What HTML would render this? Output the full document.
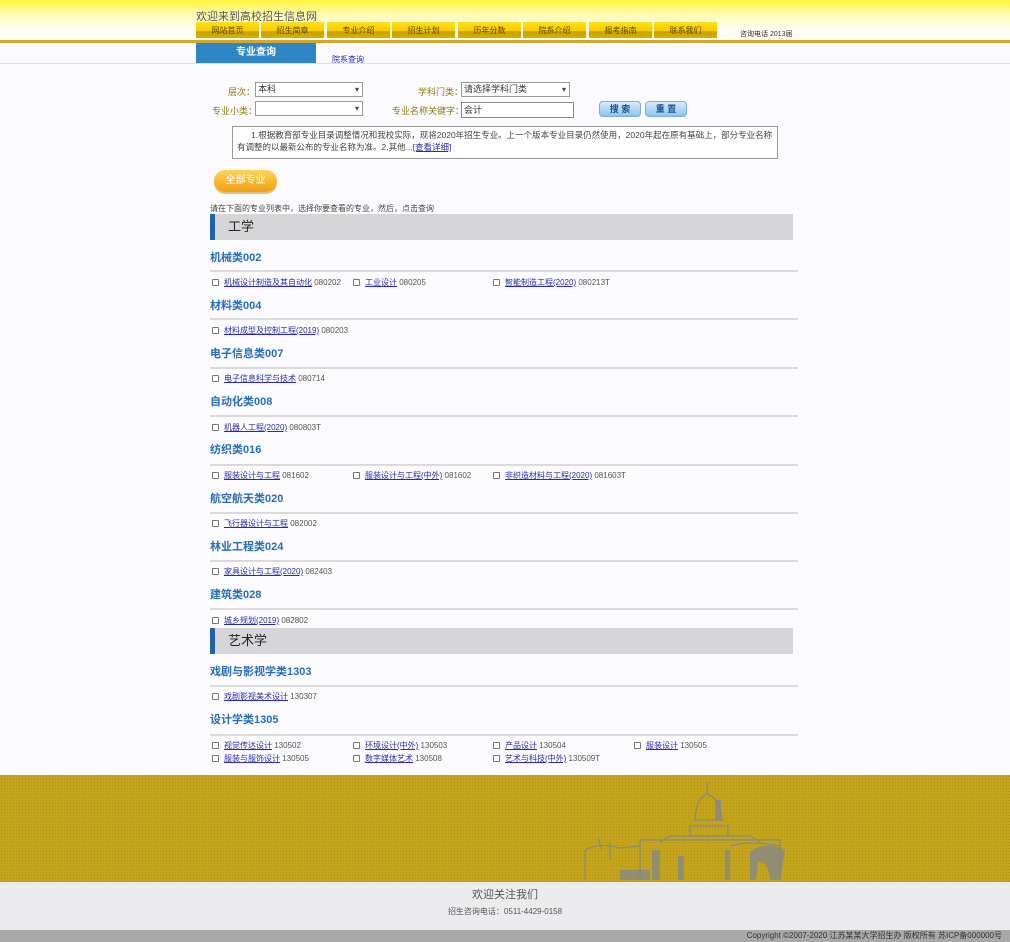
<!DOCTYPE html>
<html><head><meta charset="utf-8">
<style>
*{margin:0;padding:0;box-sizing:border-box}
body{width:1010px;height:942px;position:relative;background:#fbfbfd;font-family:"Liberation Sans","Noto Sans CJK SC",sans-serif;font-size:9px;color:#333;overflow:hidden}
.a{position:absolute;white-space:nowrap}
.hdr{left:0;top:0;width:1010px;height:41px;background:linear-gradient(#fff43a 0,#fffbb0 14px,#fffef0 28px,#fdfdf8 40px)}
.oline{left:0;top:40px;width:1010px;height:3px;background:#d7a62a}
.tab{top:22px;height:16px;width:64px;background:linear-gradient(#ffe01a 0,#f5cc00 55%,#c9a000 60%,#d8b000 100%);border-right:1px solid #fff6b0;text-align:center;line-height:18px;font-size:8px;color:#5a4a00}
.blue{left:196px;top:43px;width:120px;height:20px;background:#2f86c6;color:#fff;text-align:center;line-height:20px;font-size:10px;font-weight:bold}
.gl{left:0;top:63px;width:1010px;height:1px;background:#ddd}
.lbl{font-size:9px;color:#8a7a10}
.sel{height:15px;border:1px solid #999;background:#fff;font-size:9px;line-height:13px;padding-left:2px}
.sel:after{content:"▾";position:absolute;right:3px;top:0;font-size:8px;color:#444}
.btn{top:101px;height:16px;width:42px;border-radius:4px;background:linear-gradient(#d8ecfb,#8cc4ee);border:1px solid #7ab0dc;text-align:center;font-size:9px;line-height:14px;color:#1a4f8a;font-weight:bold}
.note{left:232px;top:126px;width:546px;height:33px;border:1px solid #999;background:#fff;font-size:8.5px;line-height:12px;padding:2px 4px;white-space:normal;color:#444}
.ob{left:214px;top:170px;width:63px;height:22px;border-radius:11px;background:linear-gradient(#ffd45a,#f0a010);box-shadow:0 2px 0 #e0c080;color:#fff;text-align:center;line-height:22px;font-size:10px}
.bar{left:210px;width:583px;height:26px;background:#d6d6d8;border-left:5px solid #1e63a8;font-size:13px;line-height:26px;padding-left:13px;color:#222}
.h{left:210px;font-size:11px;font-weight:bold;color:#2a6cb8}
.ln{left:210px;width:588px;height:2px;background:#dadada}
.it{font-size:8px;color:#555}
.it i{display:inline-block;width:7px;height:7px;border:1px solid #777;border-radius:1px;margin-right:5px;vertical-align:-1px;background:#fff}
.it u{color:#2a2ab0}
.gold{left:0;top:775px;width:1010px;height:107px;background:#c4a41c;background-image:radial-gradient(#b39415 0.6px,transparent 0.8px);background-size:3px 3px}
.gray{left:0;top:882px;width:1010px;height:48px;background:#ececee}
.dk{left:0;top:930px;width:1010px;height:12px;background:#a8a8a8;text-align:right;font-size:8px;line-height:12px;padding-right:8px;color:#333}
</style></head><body>
<div class="a hdr"></div>
<div class="a" style="left:196px;top:8px;font-size:11px;color:#555">欢迎来到高校招生信息网</div>
<div class="a tab" style="left:196px">网站首页</div>
<div class="a tab" style="left:261px">招生简章</div>
<div class="a tab" style="left:327px">专业介绍</div>
<div class="a tab" style="left:392px">招生计划</div>
<div class="a tab" style="left:458px">历年分数</div>
<div class="a tab" style="left:523px">院系介绍</div>
<div class="a tab" style="left:589px">报考指南</div>
<div class="a tab" style="left:654px;width:64px">联系我们</div>
<div class="a" style="left:740px;top:29px;font-size:7px;color:#333">咨询电话 2013届</div>
<div class="a oline"></div>
<div class="a blue">专业查询</div>
<div class="a" style="left:332px;top:54px;font-size:8px;color:#2a2ab0;text-decoration:underline">院系查询</div>
<div class="a gl"></div>

<div class="a lbl" style="left:228px;top:85px">层次：</div>
<div class="a sel" style="left:255px;top:82px;width:108px">本科</div>
<div class="a lbl" style="left:212px;top:104px">专业小类：</div>
<div class="a sel" style="left:255px;top:101px;width:108px"></div>
<div class="a lbl" style="left:418px;top:85px">学科门类：</div>
<div class="a sel" style="left:461px;top:82px;width:109px">请选择学科门类</div>
<div class="a lbl" style="left:392px;top:104px">专业名称关键字：</div>
<div class="a" style="left:461px;top:102px;width:113px;height:16px;border:1px solid #888;background:#fff;font-size:9px;line-height:14px;padding-left:2px">会计</div>
<div class="a btn" style="left:599px">搜 索</div>
<div class="a btn" style="left:645px">重 置</div>

<div class="a note">&nbsp;&nbsp;&nbsp;&nbsp;&nbsp;&nbsp;1.根据教育部专业目录调整情况和我校实际，现将2020年招生专业。上一个版本专业目录仍然使用，2020年起在原有基础上，部分专业名称有调整的以最新公布的专业名称为准。2.其他...<u style="color:#2a2ab0">[查看详细]</u></div>
<div class="a ob">全部专业</div>
<div class="a" style="left:210px;top:203px;font-size:8px;color:#444">请在下面的专业列表中，选择你要查看的专业，然后，点击查询</div>

<div class="a bar" style="top:214px">工学</div>
<div class="a h" style="top:249px">机械类002</div><div class="a ln" style="top:270px"></div>
<div class="a it" style="left:212px;top:277px"><i></i><u>机械设计制造及其自动化</u> 080202</div>
<div class="a it" style="left:353px;top:277px"><i></i><u>工业设计</u> 080205</div>
<div class="a it" style="left:493px;top:277px"><i></i><u>智能制造工程(2020)</u> 080213T</div>
<div class="a h" style="top:297px">材料类004</div><div class="a ln" style="top:318px"></div>
<div class="a it" style="left:212px;top:325px"><i></i><u>材料成型及控制工程(2019)</u> 080203</div>
<div class="a h" style="top:345px">电子信息类007</div><div class="a ln" style="top:367px"></div>
<div class="a it" style="left:212px;top:373px"><i></i><u>电子信息科学与技术</u> 080714</div>
<div class="a h" style="top:393px">自动化类008</div><div class="a ln" style="top:415px"></div>
<div class="a it" style="left:212px;top:422px"><i></i><u>机器人工程(2020)</u> 080803T</div>
<div class="a h" style="top:441px">纺织类016</div><div class="a ln" style="top:464px"></div>
<div class="a it" style="left:212px;top:470px"><i></i><u>服装设计与工程</u> 081602</div>
<div class="a it" style="left:353px;top:470px"><i></i><u>服装设计与工程(中外)</u> 081602</div>
<div class="a it" style="left:493px;top:470px"><i></i><u>非织造材料与工程(2020)</u> 081603T</div>
<div class="a h" style="top:490px">航空航天类020</div><div class="a ln" style="top:512px"></div>
<div class="a it" style="left:212px;top:518px"><i></i><u>飞行器设计与工程</u> 082002</div>
<div class="a h" style="top:538px">林业工程类024</div><div class="a ln" style="top:560px"></div>
<div class="a it" style="left:212px;top:566px"><i></i><u>家具设计与工程(2020)</u> 082403</div>
<div class="a h" style="top:586px">建筑类028</div><div class="a ln" style="top:608px"></div>
<div class="a it" style="left:212px;top:615px"><i></i><u>城乡规划(2019)</u> 082802</div>

<div class="a bar" style="top:628px">艺术学</div>
<div class="a h" style="top:663px">戏剧与影视学类1303</div><div class="a ln" style="top:685px"></div>
<div class="a it" style="left:212px;top:691px"><i></i><u>戏剧影视美术设计</u> 130307</div>
<div class="a h" style="top:711px">设计学类1305</div><div class="a ln" style="top:734px"></div>
<div class="a it" style="left:212px;top:740px"><i></i><u>视觉传达设计</u> 130502</div>
<div class="a it" style="left:353px;top:740px"><i></i><u>环境设计(中外)</u> 130503</div>
<div class="a it" style="left:493px;top:740px"><i></i><u>产品设计</u> 130504</div>
<div class="a it" style="left:634px;top:740px"><i></i><u>服装设计</u> 130505</div>
<div class="a it" style="left:212px;top:753px"><i></i><u>服装与服饰设计</u> 130505</div>
<div class="a it" style="left:353px;top:753px"><i></i><u>数字媒体艺术</u> 130508</div>
<div class="a it" style="left:493px;top:753px"><i></i><u>艺术与科技(中外)</u> 130509T</div>

<div class="a gold"></div>
<svg class="a" style="left:580px;top:780px" width="220" height="102" viewBox="0 0 220 102">
<g fill="none" stroke="#7f8790" stroke-width="1.2" opacity="0.85">
<path d="M127 2 V14 M115 40 Q116 18 127 14 Q140 18 142 40 Z M114 40 H144 M110 46 H148 V56 H110 Z"/>
<path d="M60 60 H200 M60 60 V100 M200 60 V100 M80 62 L90 56 H170 L180 62"/>
<path d="M5 70 Q20 62 40 68 L60 66 M5 70 V100 M150 66 Q170 60 200 66"/>
<path d="M18 58 L22 70 M30 62 V80"/>
</g>
<g fill="#7f8790" opacity="0.75">
<rect x="135" y="20" width="6" height="20"/>
<rect x="72" y="70" width="8" height="30"/>
<rect x="98" y="76" width="6" height="24"/>
<rect x="145" y="70" width="5" height="30"/>
<path d="M170 72 Q185 60 205 70 L200 100 H190 Q188 80 178 82 L176 100 H170 Z"/>
<rect x="40" y="90" width="30" height="10"/>
</g>
</svg>
<div class="a gray"></div>
<div class="a" style="left:0;width:1010px;top:886px;text-align:center;font-size:11px;color:#555">欢迎关注我们</div>
<div class="a" style="left:0;width:1010px;top:906px;text-align:center;font-size:8px;color:#555">招生咨询电话：0511-4429-0158</div>
<div class="a dk">Copyright ©2007-2020 江苏某某大学招生办 版权所有 苏ICP备000000号</div>
</body></html>
